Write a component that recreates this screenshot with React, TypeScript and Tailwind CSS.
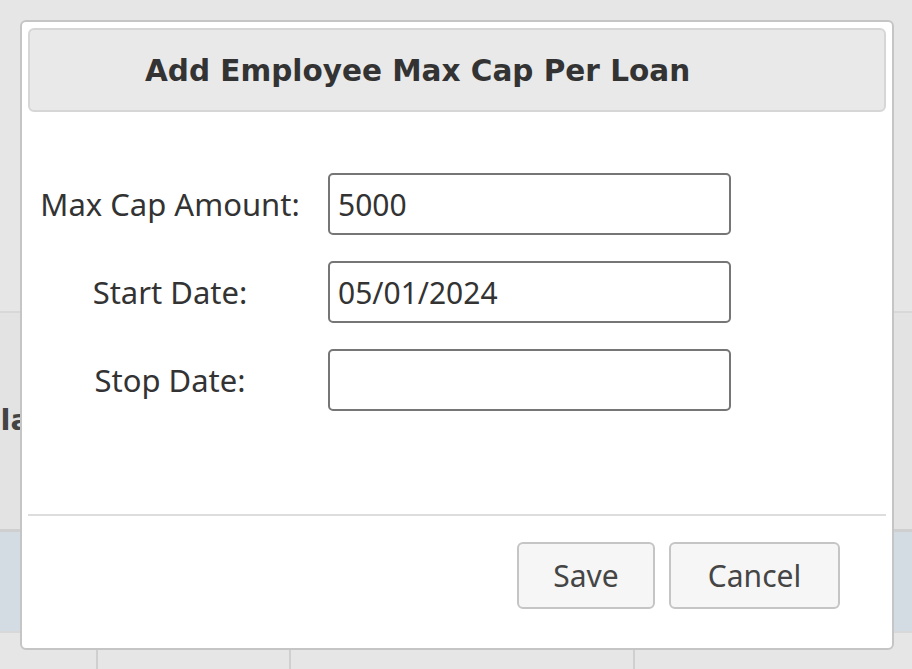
import React from "react";

const sans = { fontFamily: '"Noto Sans", "Open Sans", sans-serif' };

function Field({ label, value }: { label: string; value: string }) {
    return (
        <div className="flex items-center h-[62px]">
            <label className="w-[284px] text-center text-[31px] text-[#333333] font-['Noto_Sans',sans-serif]">
                {label}
            </label>
            <input
                readOnly
                value={value}
                className="ml-[16px] w-[403px] h-[62px] px-[8px] border-2 border-[#767676] rounded-[5px] bg-white text-[30px] text-[#333333] font-['Noto_Sans',sans-serif] outline-none"
            />
        </div>
    );
}

export default function App() {
    return (
        <div className="relative w-[912px] h-[669px] overflow-hidden bg-[#e6e6e6]" style={sans}>
            {/* page behind the dialog */}
            <div className="flex flex-col h-full">
                <div className="h-[313px] border-b-2 border-[#d8d8d8]" />
                <div className="h-[216px] bg-[#e3e3e3] flex items-center">
                    <span className="ml-[-40px] text-[29px] font-bold text-[#444444] font-['DejaVu_Sans',sans-serif] whitespace-nowrap">
                        Salary
                    </span>
                </div>
                <div className="h-[104px] bg-[#d3dce3] border-t-[3px] border-b-2 border-t-[#cfcfcf] border-b-[#d8d8d8]" />
                <div className="flex flex-1">
                    <div className="w-[98px] border-r-2 border-[#cfcfcf]" />
                    <div className="w-[193px] border-r-2 border-[#cfcfcf]" />
                    <div className="w-[344px] border-r-2 border-[#cfcfcf]" />
                    <div className="flex-1" />
                </div>
            </div>

            {/* dialog */}
            <div className="absolute left-[20px] top-[20px] w-[874px] h-[630px] bg-white border-2 border-[#c5c5c5] rounded-[6px] p-[6px] flex flex-col">
                <div className="h-[84px] shrink-0 bg-[#e9e9e9] border-2 border-[#d6d6d6] rounded-[6px] flex items-center pl-[115px] pt-[3px]">
                    <h1 className="text-[29.5px] font-bold text-[#333333] font-['DejaVu_Sans',sans-serif] leading-none">
                        Add Employee Max Cap Per Loan
                    </h1>
                </div>

                <div className="flex-1 flex flex-col gap-[26px] pt-[61px]">
                    <Field label="Max Cap Amount:" value="5000" />
                    <Field label="Start Date:" value="05/01/2024" />
                    <Field label="Stop Date:" value="" />
                </div>

                <div className="border-t-2 border-[#dddddd] flex justify-end gap-[14px] pt-[26px] pb-[33px] pr-[46px]">
                    <button className="w-[138px] h-[67px] bg-[#f6f6f6] border-2 border-[#c5c5c5] rounded-[6px] text-[30px] text-[#454545] font-['Noto_Sans',sans-serif]">
                        Save
                    </button>
                    <button className="w-[171px] h-[67px] bg-[#f6f6f6] border-2 border-[#c5c5c5] rounded-[6px] text-[30px] text-[#454545] font-['Noto_Sans',sans-serif]">
                        Cancel
                    </button>
                </div>
            </div>
        </div>
    );
}
